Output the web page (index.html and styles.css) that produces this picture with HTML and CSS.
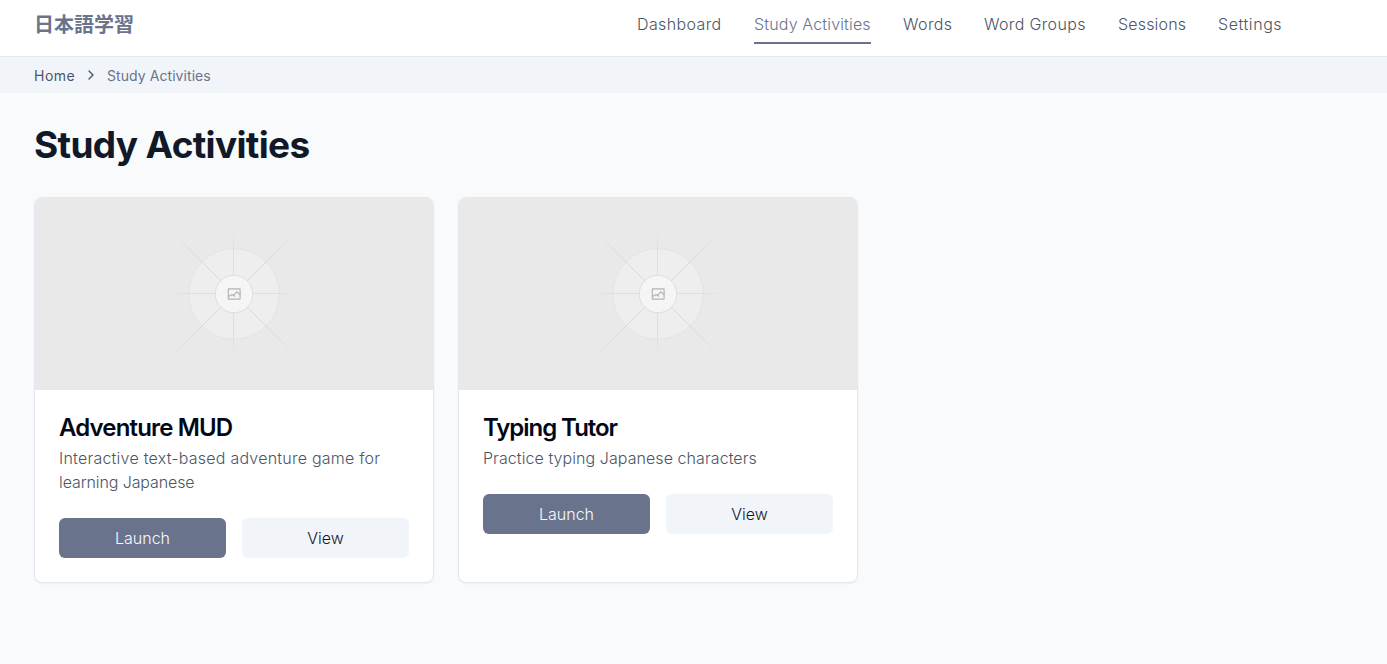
FILE: index.html
```html
<!DOCTYPE html>
<html lang="en">
<head>
<meta charset="utf-8">
<title>Study Activities</title>
<link rel="stylesheet" href="styles.css">
</head>
<body>
<svg width="0" height="0" class="defs" aria-hidden="true">
  <defs>
    <radialGradient id="ray" gradientUnits="userSpaceOnUse" cx="199" cy="96" r="64">
      <stop offset="0.7" stop-color="#dedede"/>
      <stop offset="1" stop-color="#dedede" stop-opacity="0"/>
    </radialGradient>
    <radialGradient id="diagonal" gradientUnits="userSpaceOnUse" cx="199" cy="96" r="90">
      <stop offset="0.65" stop-color="#dadada"/>
      <stop offset="1" stop-color="#dadada" stop-opacity="0"/>
    </radialGradient>
    <symbol id="placeholder" viewBox="0 0 398 192">
      <circle cx="199" cy="96" r="45.3" fill="#eeeeee" stroke="#e3e3e3"/>
      <path d="M198.5 32L198.6 160M135 95.5L263 95.6" stroke="url(#ray)"/>
      <path d="M136 33L262 159M262 33L136 159" stroke="url(#diagonal)"/>
      <circle cx="199" cy="96" r="18.8" fill="#f5f5f5" stroke="#dedede"/>
      <g fill="none" stroke="#b4b4b4" stroke-width="1.2">
        <rect x="193.3" y="90.9" width="11.8" height="10.2" rx="0.4"/>
        <path d="M193.5 98.4L197 96.6L200.2 98.2M198.6 97.2L202 93.8L205 96.8"/>
      </g>
    </symbol>
  </defs>
</svg>
<header class="header">
  <a class="logo">日本語学習</a>
  <nav class="nav">
    <a class="link dashboard">Dashboard</a>
    <a class="link study active">Study Activities</a>
    <a class="link words">Words</a>
    <a class="link groups">Word Groups</a>
    <a class="link sessions">Sessions</a>
    <a class="link settings">Settings</a>
  </nav>
</header>
<div class="breadcrumb">
  <a class="home">Home</a>
  <svg class="chevron" viewBox="0 0 16 16" width="16" height="16"><path d="M6 12l4-4-4-4" fill="none" stroke="currentColor" stroke-width="1.35" stroke-linecap="round" stroke-linejoin="round"/></svg>
  <span class="current">Study Activities</span>
</div>
<main class="main">
  <h1 class="title">Study Activities</h1>
  <div class="cards">
    <article class="card">
      <svg class="image"><use href="#placeholder"/></svg>
      <div class="body">
        <h2 class="name adventure">Adventure MUD</h2>
        <p class="desc"><span class="d1">Interactive text-based adventure game for</span><br><span class="d2">learning Japanese</span></p>
        <div class="actions"><a class="button primary">Launch</a><a class="button secondary">View</a></div>
      </div>
    </article>
    <article class="card">
      <svg class="image"><use href="#placeholder"/></svg>
      <div class="body">
        <h2 class="name typing">Typing Tutor</h2>
        <p class="desc"><span class="d3">Practice typing Japanese characters</span></p>
        <div class="actions"><a class="button primary">Launch</a><a class="button secondary">View</a></div>
      </div>
    </article>
  </div>
</main>
</body>
</html>
```
FILE: styles.css
```css
* { box-sizing: border-box; }
body {
  margin: 0;
  min-height: 664px;
  background: #f9fafc;
  color: #4b5565;
  font: 300 16px/24px Inter, "Noto Sans CJK JP", sans-serif;
}
.defs { position: absolute; }
.header {
  height: 57px;
  padding: 4px 105px 0 34px;
  display: flex;
  justify-content: space-between;
  background: #fff;
  border-bottom: 1px solid #e2e7f0;
}
.logo {
  padding-top: 6px;
  color: #69738c;
  font: 700 20px/28px "Noto Sans CJK JP", sans-serif;
}
.nav {
  display: grid;
  grid-template-columns: 85px 117px 49px 102px 68px 64px;
  column-gap: 32px;
  height: 40px;
}
.link { padding-top: 8px; white-space: nowrap; }
.dashboard, .words { letter-spacing: .38px; }
.study { letter-spacing: .16px; }
.groups { letter-spacing: .35px; }
.sessions { letter-spacing: .17px; }
.settings { letter-spacing: .57px; }
.active { color: #69738c; border-bottom: 2px solid #69738c; }
.breadcrumb {
  height: 36px;
  padding-left: 34px;
  display: flex;
  align-items: center;
  background: #f1f5fa;
  font-size: 14px;
  line-height: 20px;
  font-weight: 400;
}
.home { width: 41px; padding-top: 1px; letter-spacing: .5px; }
.chevron { margin: 0 8px; color: #4b5565; }
.current { padding-top: 1px; color: #69738c; letter-spacing: .07px; }
.main { padding: 28px 34px; }
.title {
  margin: 0 0 28px;
  color: #111827;
  font-size: 37px;
  line-height: 48px;
  font-weight: 700;
  letter-spacing: -.67px;
}
.cards { display: grid; grid-template-columns: 400px 400px; gap: 24px; }
.card {
  height: 386px;
  overflow: hidden;
  background: #fff;
  border: 1px solid #e2e7f0;
  border-radius: 8px;
  box-shadow: 0 1px 2px rgba(0, 0, 0, .05);
}
.image { display: block; width: 398px; height: 192px; background: #e9e9e9; }
.body { padding: 26px 24px 24px; }
.name {
  margin: 0 0 6px;
  color: #020817;
  font-size: 24px;
  line-height: 24px;
  font-weight: 600;
}
.adventure { letter-spacing: -.85px; }
.typing { letter-spacing: -1.05px; }
.desc { margin: 0 0 24px; white-space: nowrap; }
.d1 { letter-spacing: .23px; }
.d2 { letter-spacing: -.1px; }
.d3 { letter-spacing: .07px; }
.actions { display: grid; grid-template-columns: 1fr 1fr; gap: 16px; }
.button { height: 40px; border-radius: 6px; line-height: 40px; text-align: center; }
.primary { background: #69738c; color: #f8fafc; }
.secondary { background: #f1f5fa; color: #111827; }
```
